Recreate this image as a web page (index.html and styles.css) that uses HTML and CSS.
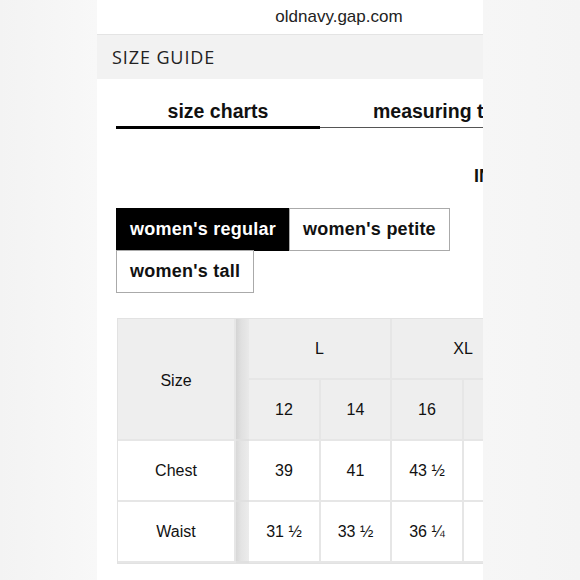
FILE: index.html
```html
<!DOCTYPE html>
<html>
<head>
<meta charset="utf-8">
<link rel="stylesheet" href="styles.css">
</head>
<body>
<div class="screen">
  <div class="page">
    <div class="urlbar">oldnavy.gap.com</div>
    <div class="titlebar">SIZE GUIDE</div>
    <div class="tabs">
      <div class="tab active">size charts</div>
      <div class="tab second">measuring tips</div>
    </div>
    <div class="units"><span class="unit">IN</span></div>
    <div class="fits">
      <div class="fit selected">women's regular</div>
      <div class="fit">women's petite</div>
      <div class="fit">women's tall</div>
    </div>
    <div class="table">
      <div class="cell head sizehead">Size</div>
      <div class="shadow s1"></div>
      <div class="cell head grp g1">L</div>
      <div class="cell head grp g2">XL</div>
      <div class="cell head num">12</div>
      <div class="cell head num">14</div>
      <div class="cell head num">16</div>
      <div class="cell head num">18</div>

      <div class="cell label">Chest</div>
      <div class="shadow"></div>
      <div class="cell">39</div>
      <div class="cell">41</div>
      <div class="cell">43 ½</div>
      <div class="cell">46</div>

      <div class="cell label">Waist</div>
      <div class="shadow"></div>
      <div class="cell">31 ½</div>
      <div class="cell">33 ½</div>
      <div class="cell">36 ¼</div>
      <div class="cell">39</div>
    </div>
  </div>
</div>
</body>
</html>
```

FILE: styles.css
```css
html, body {
  margin: 0;
  padding: 0;
}
body {
  background: linear-gradient(90deg, #f3f3f3 0px, #f8f8f8 97px, #f6f6f6 483px, #f4f4f4 580px);
  height: 580px;
  overflow: hidden;
  font-family: "Liberation Sans", Arial, sans-serif;
  color: #111;
}
.screen {
  margin-left: 97px;
  width: 386px;
  height: 580px;
  overflow: hidden;
  background: #fff;
}
.page {
  width: 484px;
}
.urlbar {
  height: 34px;
  line-height: 34px;
  text-align: center;
  font-size: 17px;
  color: #222;
  border-bottom: 1px solid #e4e4e4;
}
.titlebar {
  height: 44px;
  line-height: 44px;
  background: #f2f2f2;
  padding-left: 15px;
  font-family: "Open Sans", sans-serif;
  font-size: 18px;
  letter-spacing: 0.9px;
  color: #222;
}
.tabs {
  display: flex;
  padding-left: 19px;
  margin-top: 19px;
}
.tab {
  width: 204px;
  flex: none;
  text-align: center;
  font-size: 19.5px;
  font-weight: bold;
  height: 30px;
  line-height: 26px;
  border-bottom: 1px solid #555;
  white-space: nowrap;
}
.tab.second {
  width: 246px;
  text-align: left;
  padding-left: 53px;
  box-sizing: border-box;
}
.tab.active {
  border-bottom: 3px solid #000;
  height: 28px;
}
.units {
  height: 79px;
  padding-left: 377px;
  box-sizing: border-box;
  padding-top: 37px;
}
.unit {
  font-size: 18px;
  font-weight: bold;
  line-height: 20px;
}
.fits {
  display: flex;
  flex-wrap: wrap;
  width: 350px;
  margin-left: 19px;
}
.fit {
  height: 41px;
  line-height: 41px;
  padding: 0 13px;
  border: 1px solid #aaa;
  margin-right: -1px;
  margin-bottom: -1px;
  font-size: 18px;
  font-weight: bold;
  letter-spacing: 0.25px;
  color: #111;
  background: #fff;
}
.fit.selected {
  background: #000;
  color: #fff;
  border-color: #000;
}
.table {
  margin-top: 26px;
  margin-left: 20px;
  display: grid;
  grid-template-columns: 118px 13px 72px 71px 72px 72px;
  grid-template-rows: 61px 61px 61px 61px;
  border: 1px solid #e2e2e2;
  width: max-content;
}
.cell {
  display: flex;
  align-items: center;
  justify-content: center;
  font-size: 16px;
  color: #111;
  border-right: 2px solid #e6e6e6;
  border-bottom: 2px solid #e6e6e6;
  background: #fff;
}
.cell.head {
  background: #eeeeee;
}
.sizehead {
  grid-row: 1 / span 2;
  padding-top: 4px;
}
.grp.g1 {
  grid-column: 3 / span 2;
}
.grp.g2 {
  grid-column: 5 / span 2;
}
.shadow {
  background: linear-gradient(90deg, #d8d8d8 0%, #e4e4e4 40%, #ececec 100%);
  border-bottom: 2px solid #e0e0e0;
}
.shadow.s1 {
  grid-row: 1 / span 2;
  background: linear-gradient(90deg, #d4d4d4 0%, #e0e0e0 40%, #e9e9e9 100%);
}
```
